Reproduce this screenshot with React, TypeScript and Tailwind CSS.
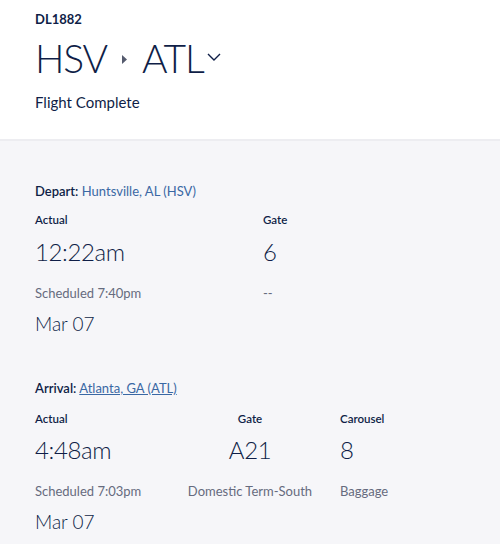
import React from "react";

export default function App() {
  const font = { fontFamily: "Lato, 'Open Sans', sans-serif" };
  const big = "text-[24px] font-light leading-[30px] tracking-[-0.4px]";
  const label = "text-[11.5px] font-semibold leading-[16px]";
  const sub = "text-[13px] text-[#666b7e] leading-[18px]";
  return (
    <div className="w-[500px] h-[544px] overflow-hidden bg-[#f6f6f9] text-[#0f1e47]" style={font}>
      <div className="bg-white pl-[35px] pt-[10px] h-[141px] border-b-2 border-[#ededf1]">
        <div className="text-[13px] font-bold leading-[18px]">DL1882</div>
        <div className="flex items-center mt-[8px] h-[44px]">
          <span className="text-[39px] font-light leading-none tracking-[-1.2px]">HSV</span>
          <svg width="5" height="9" viewBox="0 0 5 9" className="ml-[15px] mr-[15px] mt-[2px]">
            <path d="M0 0 L5 4.5 L0 9 Z" fill="#555b6e" />
          </svg>
          <span className="text-[39px] font-light leading-none tracking-[-1.2px]">ATL</span>
          <svg width="14" height="8" viewBox="0 0 14 8" className="ml-[4px] mt-[-2px]">
            <path d="M1 1 L7 7 L13 1" fill="none" stroke="#0f1e47" strokeWidth="1.4" />
          </svg>
        </div>
        <div className="text-[15px] mt-[12px] leading-[20px]">Flight Complete</div>
      </div>

      <div className="pl-[35px] pt-[41px]">
        <div className="text-[13px] leading-[18px]">
          <span className="font-semibold">Depart:</span>{" "}
          <span className="text-[#3a68a4]">Huntsville, AL (HSV)</span>
        </div>
        <div className="flex mt-[12px]">
          <div className="w-[228px]">
            <div className={label}>Actual</div>
            <div className={`${big} mt-[9px]`}>12:22am</div>
            <div className={`${sub} mt-[17px]`}>Scheduled 7:40pm</div>
          </div>
          <div>
            <div className={label}>Gate</div>
            <div className={`${big} mt-[9px]`}>6</div>
            <div className={`${sub} mt-[17px]`}>--</div>
          </div>
        </div>
        <div className="text-[19px] font-light leading-[24px] mt-[10px]">Mar 07</div>

        <div className="text-[13px] leading-[18px] mt-[43px]">
          <span className="font-semibold">Arrival:</span>{" "}
          <a className="text-[#3a68a4] underline">Atlanta, GA (ATL)</a>
        </div>
        <div className="flex mt-[14px]">
          <div className="w-[150px]">
            <div className={label}>Actual</div>
            <div className={`${big} mt-[8px]`}>4:48am</div>
            <div className={`${sub} mt-[17px]`}>Scheduled 7:03pm</div>
          </div>
          <div className="w-[130px] flex flex-col items-center">
            <div className={label}>Gate</div>
            <div className={`${big} mt-[8px]`}>A21</div>
            <div className={`${sub} mt-[17px] whitespace-nowrap`}>Domestic Term-South</div>
          </div>
          <div className="ml-[25px]">
            <div className={label}>Carousel</div>
            <div className={`${big} mt-[8px]`}>8</div>
            <div className={`${sub} mt-[17px]`}>Baggage</div>
          </div>
        </div>
        <div className="text-[19px] font-light leading-[24px] mt-[10px]">Mar 07</div>
      </div>
    </div>
  );
}
